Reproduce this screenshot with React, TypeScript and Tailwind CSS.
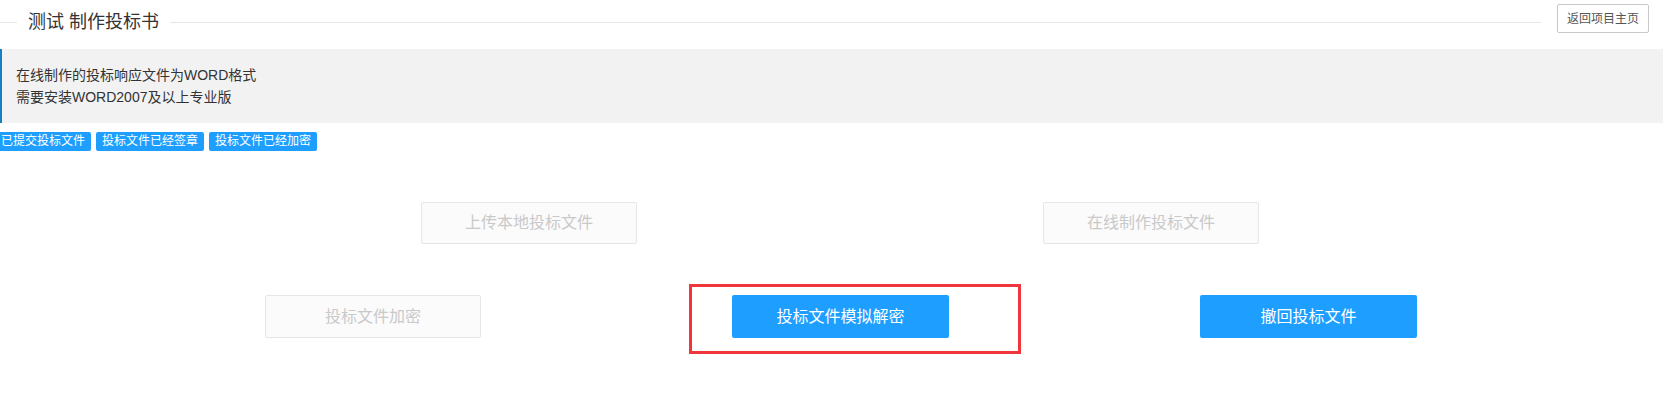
import React from "react";

const font = { fontFamily: '"Liberation Sans", "Noto Sans CJK SC", sans-serif' };

function DisabledBtn({ label, h }: { label: string; h: string }) {
  return (
    <div
      className={`w-[216px] ${h} flex items-center justify-center border border-[#e6e6e6] bg-[#fbfbfb] rounded-[2px] text-[16px] text-[#c9c9c9]`}
    >
      {label}
    </div>
  );
}

function BlueBtn({ label }: { label: string }) {
  return (
    <div className="w-[217px] h-[43px] flex items-center justify-center bg-[#1e9fff] rounded-[2px] text-[16px] text-white">
      {label}
    </div>
  );
}

export default function App() {
  return (
    <div className="w-full h-[418px] bg-white overflow-hidden" style={font}>
      {/* header */}
      <div className="flex h-[49px]">
        <div className="flex-1 flex items-center h-[44px]">
          <div className="w-[17px] h-px bg-[#e6e6e6]" />
          <div className="px-[11px] text-[18px] leading-none text-[#333]">测试 制作投标书</div>
          <div className="flex-1 h-px bg-[#e6e6e6]" />
        </div>
        <div className="mt-[4px] ml-[16px] mr-[14px] w-[92px] h-[29px] flex items-center justify-center border border-[#c9c9c9] rounded-[2px] text-[12px] text-[#555]">
          返回项目主页
        </div>
      </div>

      {/* quote */}
      <div className="h-[74px] bg-[#f2f2f2] border-l-2 border-[#1a7ec6] pl-[14px] pt-[15px] text-[14px] leading-[22px] text-[#333]">
        <div>在线制作的投标响应文件为WORD格式</div>
        <div>需要安装WORD2007及以上专业版</div>
      </div>

      {/* tags */}
      <div className="mt-[9px] ml-[-5px] flex gap-[5px]">
        {["已提交投标文件", "投标文件已经签章", "投标文件已经加密"].map((t) => (
          <div
            key={t}
            className="h-[19px] px-[6px] text-[12px] leading-[19px] bg-[#1e9fff] text-white rounded-[2px]"
          >
            {t}
          </div>
        ))}
      </div>

      {/* row 1 */}
      <div className="mt-[51px] pl-[17px] flex justify-center gap-[406px]">
        <DisabledBtn label="上传本地投标文件" h="h-[42px]" />
        <DisabledBtn label="在线制作投标文件" h="h-[42px]" />
      </div>

      {/* row 2 */}
      <div className="mt-[51px] pl-[19px] flex justify-center gap-[251px]">
        <DisabledBtn label="投标文件加密" h="h-[43px]" />
        <div className="relative">
          <BlueBtn label="投标文件模拟解密" />
          <div className="absolute left-[-43px] top-[-11px] w-[332px] h-[70px] border-[3px] border-[#f0363b] pointer-events-none" />
        </div>
        <BlueBtn label="撤回投标文件" />
      </div>
    </div>
  );
}
